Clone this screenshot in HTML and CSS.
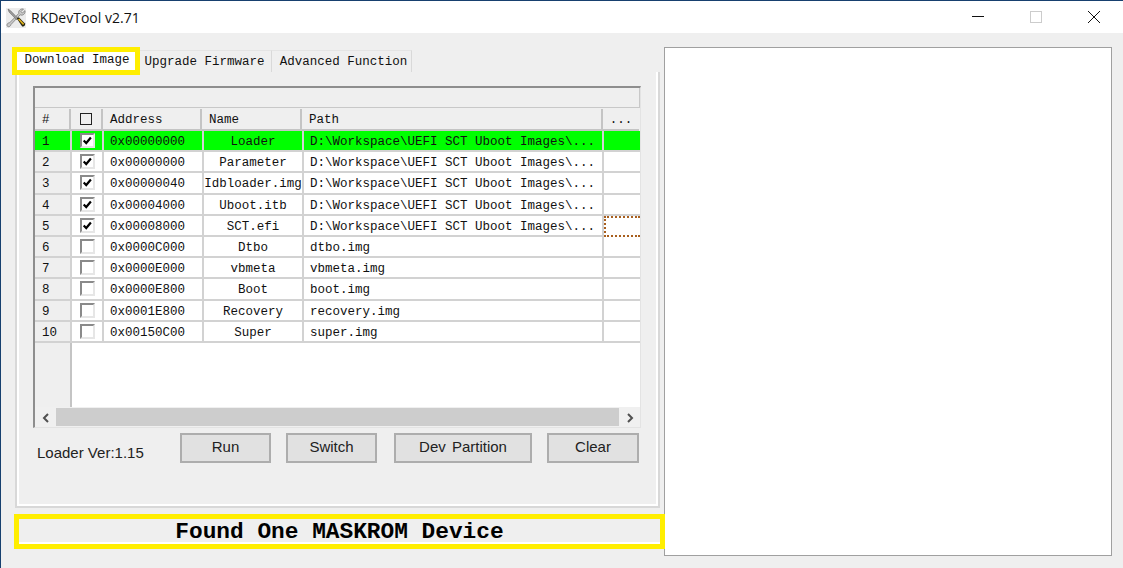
FILE: index.html
```html
<!DOCTYPE html>
<html lang="en">
<head>
  <meta charset="UTF-8" />
  <title>RKDevTool v2.71</title>
  <link rel="stylesheet" href="styles.css">
</head>
<body>

  <div class="window">
    <header class="titlebar">
      <svg class="app-icon" width="20" height="20" viewBox="0 0 20 20">
        <rect width="20" height="20" fill="#ececec"/>
        <path d="M17.5 1 L15 3.6 L16.4 5 L19 2.6 C19.6 6 16.6 8 14.2 6.8 L5 16.5 C4.4 19 1.6 19.4 1 17.6 C0.6 16 2 14.8 3.6 14.8 L12.8 5.4 C12 3 14.4 0.4 17.5 1 Z" fill="#c9c9c9" stroke="#6e6e6e" stroke-width="0.7"/>
        <path d="M2 1 L4.4 2.6 L12 10.4 L10.6 11.8 L3 4 Z" fill="#9a9a9a" stroke="#5a5a5a" stroke-width="0.5"/>
        <path d="M10.8 10.6 L12.8 9.2 L19 15.6 C19.6 17.4 18 19 16.2 18.4 Z" fill="#23230f"/>
        <path d="M12.6 11 L17.6 16.4" stroke="#e2b21c" stroke-width="1.6"/>
      </svg>
      <span class="app-title">RKDevTool v2.71</span>
      <div class="controls">
        <span class="control"><svg width="12" height="12" viewBox="0 0 12 12"><path d="M0 5.5H12" stroke="#111" stroke-width="1"/></svg></span>
        <span class="control"><svg width="12" height="12" viewBox="0 0 12 12"><rect x="0.5" y="0.5" width="11" height="11" fill="none" stroke="#ccc"/></svg></span>
        <span class="control"><svg width="12" height="12" viewBox="0 0 12 12"><path d="M0 0L12 12M12 0L0 12" stroke="#111" stroke-width="1"/></svg></span>
      </div>
    </header>

    <main class="main">
      <div class="left">
        <div class="tabs">
          <span class="tab tab-active">Download Image</span>
          <span class="tab tab-second">Upgrade Firmware</span>
          <span class="tab tab-third">Advanced Function</span>
        </div>

        <section class="page">
          <div class="grid">
            <div class="strip"></div>
            <div class="row row-head">
              <span class="cell">#</span>
              <span class="cell cell-check"><i class="head-box"></i></span>
              <span class="cell">Address</span>
              <span class="cell">Name</span>
              <span class="cell">Path</span>
              <span class="cell cell-center">...</span>
            </div>

            <div class="row row-green">
              <span class="cell cell-num">1</span>
              <span class="cell cell-check"><i class="box"><svg width="13" height="13" viewBox="0 0 13 13"><path d="M2 6.5L5 9.5L10.5 3" fill="none" stroke="#000" stroke-width="2.6"/></svg></i></span>
              <span class="cell">0x00000000</span>
              <span class="cell cell-center">Loader</span>
              <span class="cell">D:\Workspace\UEFI SCT Uboot Images\...</span>
              <span class="cell"></span>
            </div>
            <div class="row">
              <span class="cell cell-num">2</span>
              <span class="cell cell-check"><i class="box"><svg width="13" height="13" viewBox="0 0 13 13"><path d="M2 6.5L5 9.5L10.5 3" fill="none" stroke="#000" stroke-width="2.6"/></svg></i></span>
              <span class="cell">0x00000000</span>
              <span class="cell cell-center">Parameter</span>
              <span class="cell">D:\Workspace\UEFI SCT Uboot Images\...</span>
              <span class="cell"></span>
            </div>
            <div class="row">
              <span class="cell cell-num">3</span>
              <span class="cell cell-check"><i class="box"><svg width="13" height="13" viewBox="0 0 13 13"><path d="M2 6.5L5 9.5L10.5 3" fill="none" stroke="#000" stroke-width="2.6"/></svg></i></span>
              <span class="cell">0x00000040</span>
              <span class="cell cell-center">Idbloader.img</span>
              <span class="cell">D:\Workspace\UEFI SCT Uboot Images\...</span>
              <span class="cell"></span>
            </div>
            <div class="row">
              <span class="cell cell-num">4</span>
              <span class="cell cell-check"><i class="box"><svg width="13" height="13" viewBox="0 0 13 13"><path d="M2 6.5L5 9.5L10.5 3" fill="none" stroke="#000" stroke-width="2.6"/></svg></i></span>
              <span class="cell">0x00004000</span>
              <span class="cell cell-center">Uboot.itb</span>
              <span class="cell">D:\Workspace\UEFI SCT Uboot Images\...</span>
              <span class="cell"></span>
            </div>
            <div class="row">
              <span class="cell cell-num">5</span>
              <span class="cell cell-check"><i class="box"><svg width="13" height="13" viewBox="0 0 13 13"><path d="M2 6.5L5 9.5L10.5 3" fill="none" stroke="#000" stroke-width="2.6"/></svg></i></span>
              <span class="cell">0x00008000</span>
              <span class="cell cell-center">SCT.efi</span>
              <span class="cell">D:\Workspace\UEFI SCT Uboot Images\...</span>
              <span class="cell cell-focus"></span>
            </div>
            <div class="row">
              <span class="cell cell-num">6</span>
              <span class="cell cell-check"><i class="box"></i></span>
              <span class="cell">0x0000C000</span>
              <span class="cell cell-center">Dtbo</span>
              <span class="cell">dtbo.img</span>
              <span class="cell"></span>
            </div>
            <div class="row">
              <span class="cell cell-num">7</span>
              <span class="cell cell-check"><i class="box"></i></span>
              <span class="cell">0x0000E000</span>
              <span class="cell cell-center">vbmeta</span>
              <span class="cell">vbmeta.img</span>
              <span class="cell"></span>
            </div>
            <div class="row">
              <span class="cell cell-num">8</span>
              <span class="cell cell-check"><i class="box"></i></span>
              <span class="cell">0x0000E800</span>
              <span class="cell cell-center">Boot</span>
              <span class="cell">boot.img</span>
              <span class="cell"></span>
            </div>
            <div class="row">
              <span class="cell cell-num">9</span>
              <span class="cell cell-check"><i class="box"></i></span>
              <span class="cell">0x0001E800</span>
              <span class="cell cell-center">Recovery</span>
              <span class="cell">recovery.img</span>
              <span class="cell"></span>
            </div>
            <div class="row">
              <span class="cell cell-num">10</span>
              <span class="cell cell-check"><i class="box"></i></span>
              <span class="cell">0x00150C00</span>
              <span class="cell cell-center">Super</span>
              <span class="cell">super.img</span>
              <span class="cell"></span>
            </div>

            <div class="filler"><span class="filler-num"></span></div>

            <div class="scrollbar">
              <span class="arrow"><svg width="10" height="10" viewBox="0 0 10 10"><path d="M7 1L3 5L7 9" fill="none" stroke="#505050" stroke-width="2"/></svg></span>
              <span class="track"></span>
              <span class="arrow"><svg width="10" height="10" viewBox="0 0 10 10"><path d="M3 1L7 5L3 9" fill="none" stroke="#505050" stroke-width="2"/></svg></span>
            </div>
          </div>

          <div class="actions">
            <span class="loader">Loader Ver:1.15</span>
            <button class="btn btn-run">Run</button>
            <button class="btn btn-switch">Switch</button>
            <button class="btn btn-dev">Dev Partition</button>
            <button class="btn btn-clear">Clear</button>
          </div>
        </section>

        <div class="status">Found One MASKROM Device</div>
      </div>

      <aside class="log"></aside>
    </main>
  </div>

</body>
</html>
```

FILE: styles.css
```css
body {
  margin: 0;
  background-color: #efefef;
  color: #111;
  font-family: "Liberation Mono", monospace;
  font-size: 12.5px;
  overflow: hidden;
}
.window {
  height: 567px;
  border-top: 1px solid #17406f;
  border-left: 1px solid #17406f;
  display: flex;
  flex-direction: column;
}
.titlebar {
  height: 32px;
  background-color: #fff;
  display: flex;
  align-items: center;
  padding-left: 5px;
}
.app-icon {
  margin-top: 1px;
}
.app-title {
  font-family: "Open Sans", sans-serif;
  font-size: 14px;
  margin-left: 5px;
}
.controls {
  margin-left: auto;
  display: flex;
}
.control {
  width: 58px;
  display: flex;
  justify-content: center;
}
.main {
  display: flex;
  align-items: flex-start;
  padding: 14px 11px 0 13px;
}
.left {
  width: 651px;
  flex-shrink: 0;
}
.tabs {
  display: flex;
  align-items: flex-start;
  height: 25px;
  margin-left: -2px;
}
.tab {
  height: 22px;
  line-height: 22px;
  margin-top: 3px;
  border-right: 1px solid #d9d9d9;
  border-top: 1px solid #e4e4e4;
  box-sizing: border-box;
  text-align: center;
}
.tab-active {
  width: 128px;
  height: 28px;
  line-height: 17px;
  margin-top: 0;
  padding-left: 2px;
  background-color: #fff;
  border: 5px solid #ffee00;
  position: relative;
  z-index: 1;
}
.tab-second {
  width: 132px;
  padding-right: 2px;
}
.tab-third {
  width: 140px;
  padding-left: 4px;
}
.page {
  width: 645px;
  height: 436px;
  box-sizing: border-box;
  margin-left: 1px;
  padding: 14px 0 0 16px;
  border-left: 2px solid #d8d8d8;
  border-right: 2px solid #d8d8d8;
  border-bottom: 2px solid #d8d8d8;
  box-shadow: inset 2px 0 0 #fff, inset -2px 0 0 #fff, inset 0 -2px 0 #fff;
}
.grid {
  width: 608px;
  height: 342px;
  box-sizing: border-box;
  border-top: 2px solid #8e8e8e;
  border-left: 2px solid #8e8e8e;
  border-right: 1px solid #e3e3e3;
  border-bottom: 1px solid #e3e3e3;
  display: flex;
  flex-direction: column;
}
.strip {
  height: 19px;
  border-right: 1px solid #c8c8c8;
  border-bottom: 1px solid #c8c8c8;
  flex-shrink: 0;
}
.row {
  display: grid;
  grid-template-columns: 37px 32px 100px 100px 300px 36px;
  height: 21.2px;
  flex-shrink: 0;
  background-color: #fff;
}
.row-head {
  grid-template-columns: 36px 32px 99px 100px 301px 36px;
  height: 22px;
  margin-top: 1px;
  background-color: #efefef;
}
.row-green {
  background-color: #00ff00;
}
.cell {
  box-sizing: border-box;
  border-right: 2px solid #d2d2d2;
  border-bottom: 2px solid #d2d2d2;
  padding: 1px 0 0 6px;
  line-height: 20px;
  white-space: nowrap;
  overflow: hidden;
}
.row-head .cell {
  border-color: #c4c4c4;
  padding: 0 0 0 7px;
  line-height: 23px;
}
.row .cell:last-child {
  border-right: 0;
}
.row .cell-center {
  padding-left: 0;
  text-align: center;
}
.row .cell-num {
  padding-left: 7px;
  background-color: #efefef;
}
.row-green .cell-num {
  background-color: #00ff00;
}
.row .cell-check {
  padding: 0;
  display: flex;
  align-items: center;
  justify-content: center;
}
.head-box {
  width: 12px;
  height: 12px;
  box-sizing: border-box;
  border: 1.5px solid #222;
}
.box {
  width: 15px;
  height: 15px;
  box-sizing: border-box;
  background-color: #fff;
  border: 2px solid #e6e6e6;
  border-top-color: #8a8a8a;
  border-left-color: #8a8a8a;
  display: flex;
  align-items: center;
  justify-content: center;
}
.row .cell-focus {
  border: 2px dotted #a85f1e;
}
.filler {
  flex: 1;
  background-color: #fff;
  display: flex;
}
.filler-num {
  width: 37px;
  box-sizing: border-box;
  background-color: #efefef;
  border-right: 2px solid #c4c4c4;
}
.scrollbar {
  height: 20px;
  flex-shrink: 0;
  display: flex;
  background-color: #f0f0f0;
  padding-top: 1px;
  box-sizing: border-box;
}
.arrow {
  width: 21px;
  display: flex;
  align-items: center;
  justify-content: center;
}
.track {
  flex: 1;
  background-color: #cdcdcd;
  margin-bottom: 1px;
}
.actions {
  display: flex;
  align-items: flex-start;
  margin-top: 5px;
}
.loader {
  font-family: "Liberation Sans", sans-serif;
  font-size: 15px;
  width: 143px;
  padding-left: 4px;
  box-sizing: border-box;
  margin-top: 11px;
  color: #222;
  white-space: nowrap;
}
.btn {
  height: 30px;
  box-sizing: border-box;
  background-color: #e1e1e1;
  border: 2px solid #adadad;
  border-radius: 0;
  color: #222;
  font-family: "Liberation Sans", sans-serif;
  font-size: 15px;
  padding: 0 0 3px;
}
.btn-run {
  width: 91px;
  margin-left: 4px;
}
.btn-switch {
  width: 91px;
  margin-left: 15px;
}
.btn-dev {
  width: 138px;
  margin-left: 17px;
  word-spacing: 2px;
}
.btn-clear {
  width: 92px;
  margin-left: 15px;
}
.status {
  height: 35px;
  margin-top: 6px;
  box-sizing: border-box;
  border: 5px solid #ffee00;
  background-color: #efefef;
  box-shadow: inset 0 -2px 0 #fff;
  font-size: 22.8px;
  font-weight: bold;
  line-height: 27px;
  text-align: center;
  color: #000;
  position: relative;
  z-index: 1;
}
.log {
  flex: 1;
  height: 509px;
  margin-left: -1px;
  box-sizing: border-box;
  background-color: #fff;
  border: 1px solid #a0a0a0;
}
```
